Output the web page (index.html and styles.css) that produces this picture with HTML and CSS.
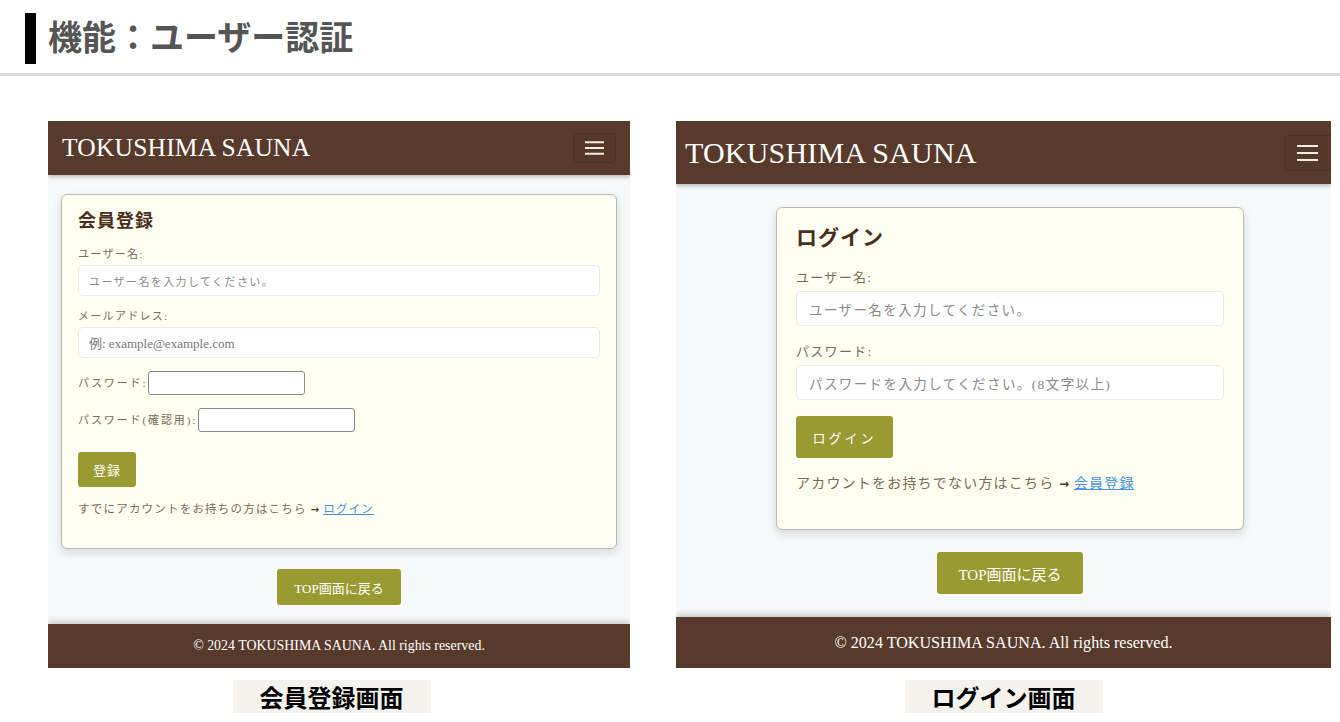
FILE: index.html
```html
<!DOCTYPE html>
<html lang="ja">
<head>
<meta charset="utf-8">
<title>機能：ユーザー認証</title>
<link rel="stylesheet" href="styles.css">
</head>
<body>
<header class="page-head">
  <span class="bar"></span>
  <h1>機能：ユーザー認証</h1>
</header>
<main class="shots">
  <figure class="shot reg">
    <div class="frame">
      <nav class="nav">
        <span class="brand">TOKUSHIMA SAUNA</span>
        <span class="toggler">
          <svg viewBox="0 0 20 14" class="burger"><path d="M0 1h20M0 7h20M0 13h20" stroke="#f3ece6" stroke-width="2"/></svg>
        </span>
      </nav>
      <div class="content">
        <section class="card">
          <h2>会員登録</h2>
          <div class="group">
            <label>ユーザー名:</label>
            <div class="field ph">ユーザー名を入力してください。</div>
          </div>
          <div class="group">
            <label>メールアドレス:</label>
            <div class="field ph latin">例: example@example.com</div>
          </div>
          <div class="row">
            <label>パスワード:</label><span class="plain-input"></span>
          </div>
          <div class="row">
            <label>パスワード(確認用):</label><span class="plain-input"></span>
          </div>
          <span class="btn submit">登録</span>
          <p class="note">すでにアカウントをお持ちの方はこちら <span class="arrow">→</span> <a href="#">ログイン</a></p>
        </section>
        <span class="btn top">TOP画面に戻る</span>
      </div>
      <footer class="foot">© 2024 TOKUSHIMA SAUNA. All rights reserved.</footer>
    </div>
    <figcaption>会員登録画面</figcaption>
  </figure>

  <figure class="shot login">
    <div class="frame">
      <nav class="nav">
        <span class="brand">TOKUSHIMA SAUNA</span>
        <span class="toggler">
          <svg viewBox="0 0 21 16" class="burger"><path d="M0 1h21M0 8h21M0 15h21" stroke="#f3ece6" stroke-width="2"/></svg>
        </span>
      </nav>
      <div class="content">
        <section class="card">
          <h2>ログイン</h2>
          <div class="group">
            <label>ユーザー名:</label>
            <div class="field ph">ユーザー名を入力してください。</div>
          </div>
          <div class="group">
            <label>パスワード:</label>
            <div class="field ph">パスワードを入力してください。(8文字以上)</div>
          </div>
          <span class="btn submit">ログイン</span>
          <p class="note">アカウントをお持ちでない方はこちら <span class="arrow">→</span> <a href="#">会員登録</a></p>
        </section>
        <span class="btn top">TOP画面に戻る</span>
      </div>
      <footer class="foot">© 2024 TOKUSHIMA SAUNA. All rights reserved.</footer>
    </div>
    <figcaption>ログイン画面</figcaption>
  </figure>
</main>
</body>
</html>
```
FILE: styles.css
```css
* { box-sizing: border-box; }
body {
  margin: 0;
  background: #fff;
  font-family: "Liberation Serif", "Noto Sans CJK JP", serif;
}
.page-head {
  height: 76px;
  border-bottom: 3px solid #dadada;
  padding: 13px 0 0 25px;
  display: flex;
  align-items: flex-start;
  gap: 12px;
}
.page-head .bar {
  width: 11px;
  height: 51px;
  background: #000;
}
.page-head h1 {
  margin: 0;
  font-family: "Noto Sans CJK JP", sans-serif;
  font-weight: 700;
  font-size: 34px;
  line-height: 45px;
  color: #555;
}
.shots {
  display: flex;
  align-items: flex-start;
  gap: 46px;
  padding-left: 48px;
  margin-top: 45px;
}
.shot {
  margin: 0;
  display: flex;
  flex-direction: column;
  align-items: center;
}
.frame {
  height: 547px;
  display: flex;
  flex-direction: column;
  overflow: hidden;
  background: #f7f8fa;
}
.reg .frame { width: 582px; }
.login .frame { width: 655px; }

.nav {
  flex: none;
  display: flex;
  align-items: center;
  justify-content: space-between;
  background: #583a2c;
  color: #fff;
  box-shadow: 0 2px 4px rgba(0,0,0,.25);
  position: relative;
  z-index: 1;
}
.brand { font-family: "Liberation Serif", serif; letter-spacing: .2px; }
.toggler {
  display: flex;
  align-items: center;
  justify-content: center;
  border: 1px solid rgba(0,0,0,.12);
  background: rgba(0,0,0,.03);
  border-radius: 5px;
}
.burger { display: block; }
.reg .nav { height: 54px; padding: 0 14px 0 14px; }
.reg .brand { font-size: 25.5px; }
.reg .toggler { width: 43px; height: 30px; }
.reg .burger { width: 19px; height: 14px; }
.login .nav { height: 63px; padding: 0 0 0 9px; }
.login .brand { font-size: 30px; }
.login .toggler { width: 52px; height: 36px; margin-right: -5px; }
.login .burger { width: 21px; height: 16px; margin-left: -6px; }

.content {
  flex: 1;
  display: flex;
  flex-direction: column;
  align-items: center;
}
.card {
  background: #fefff0;
  border: 1px solid #b9b9b3;
  border-radius: 6px;
  box-shadow: 0 4px 10px rgba(0,0,0,.13);
  display: flex;
  flex-direction: column;
  align-items: flex-start;
}
.card h2 {
  margin: 0;
  font-weight: 700;
  color: #4b2e1e;
  letter-spacing: 1px;
}
.card label {
  display: block;
  color: #7b6a5a;
  letter-spacing: 1.3px;
}
.group { width: 100%; }
.field {
  width: 100%;
  background: #fff;
  border: 1px solid #ebebe2;
  border-radius: 5px;
  display: flex;
  align-items: center;
  color: #8a8a8a;
  letter-spacing: 1.4px;
}
.field.latin { letter-spacing: 0; color: #777; }
.row { display: flex; align-items: center; }
.row label { display: inline-block; letter-spacing: 1.9px; }
.plain-input {
  display: inline-block;
  width: 157px;
  height: 24px;
  background: #fff;
  border: 1px solid #8a8a8a;
  border-radius: 3px;
  margin-left: 1px;
}
.btn {
  display: inline-flex;
  align-items: center;
  justify-content: center;
  background: #9a9a32;
  color: #fff;
  border-radius: 3px;
  letter-spacing: 1px;
}
.note {
  margin: 0;
  color: #7b6a5a;
  letter-spacing: 1.2px;
}
.note .arrow {
  font-family: "DejaVu Sans", sans-serif;
  font-weight: 700;
  color: #4b3a2e;
  letter-spacing: 0;
}
.note a { color: #4a8fe6; text-decoration: underline; }

.foot {
  flex: none;
  background: #583a2c;
  color: #fff;
  text-align: center;
  box-shadow: 0 -3px 6px rgba(0,0,0,.18);
}

/* 会員登録 sizes */
.reg .card { width: 556px; margin-top: 19px; height: 355px; padding: 15px 16px 0 16px; }
.reg .card h2 { font-size: 18px; line-height: 22px; margin-bottom: 15px; }
.reg .card label { font-size: 11px; line-height: 15px; }
.reg .group label { margin-bottom: 3px; }
.reg .group { margin-bottom: 13px; }
.reg .field { height: 31px; padding-left: 10px; font-size: 11px; }
.reg .field.latin { font-size: 13px; }
.reg .row { height: 24px; margin-bottom: 13px; }
.reg .submit { width: 58px; height: 35px; font-size: 13px; margin-top: 7px; }
.reg .note { font-size: 11.5px; line-height: 17px; margin-top: 14px; }
.reg .note .arrow { font-size: 10px; }
.reg .top { width: 124px; height: 36px; font-size: 13px; margin-top: 20px; letter-spacing: 0; }
.reg .foot { height: 44px; margin-top: auto; font-size: 13.9px; line-height: 44px; }

/* ログイン sizes */
.login .content { padding-left: 13px; }
.login .card { width: 468px; margin-top: 23px; height: 323px; padding: 17px 19px 0 19px; }
.login .card h2 { font-size: 21px; line-height: 26px; margin-bottom: 18px; }
.login .card label { font-size: 13px; line-height: 18px; margin-bottom: 4px; }
.login .group { margin-bottom: 17px; }
.login .group + .group { margin-bottom: 16px; }
.login .field { height: 35px; padding-left: 12px; font-size: 13.5px; }
.login .submit { width: 97px; height: 42px; font-size: 13px; letter-spacing: 3px; }
.login .note { font-size: 14px; line-height: 20px; margin-top: 16px; }
.login .note .arrow { font-size: 12px; }
.login .top { width: 146px; height: 42px; font-size: 15px; margin-top: 22px; letter-spacing: 0; }
.login .foot { height: 51px; margin-top: auto; font-size: 16.1px; line-height: 51px; }

figcaption {
  margin-top: 12px;
  height: 33px;
  padding: 0 27px;
  background: #f3f2ec;
  color: #000;
  font-family: "Noto Sans CJK JP", sans-serif;
  font-weight: 700;
  font-size: 24px;
  line-height: 33px;
}
.reg figcaption { margin-right: 15px; }
```
